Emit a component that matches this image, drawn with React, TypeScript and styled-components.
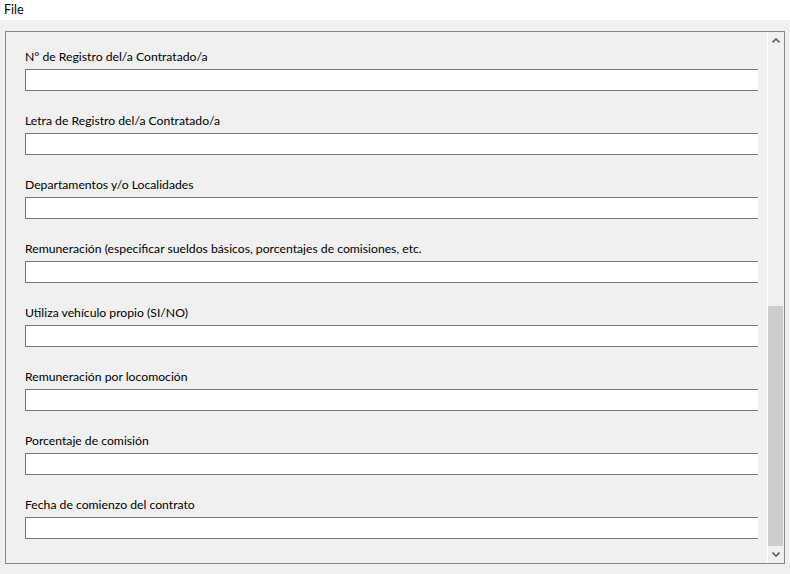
import React from "react";
import styled, { createGlobalStyle } from "styled-components";

const Global = createGlobalStyle`
  html, body { margin: 0; padding: 0; background: #ffffff; }
  body { font-family: "Lato", "Noto Sans", "DejaVu Sans", sans-serif; font-size: 12px; color: #000; }
  #root { width: 790px; height: 574px; overflow: hidden; }
`;

const Window = styled.div`
  width: 790px;
  height: 574px;
  display: flex;
  flex-direction: column;
`;

const MenuBar = styled.div`
  height: 20px;
  display: flex;
  align-items: center;
  background: #ffffff;
  padding-left: 4px;
`;

const MenuItem = styled.span`
  font-size: 12.5px;
  line-height: 16px;
`;

const Body = styled.div`
  flex: 1;
  background: #f0f0f0;
  padding: 11px 5px 10px 5px;
  display: flex;
`;

const Panel = styled.div`
  flex: 1;
  border: 1px solid #828790;
  display: flex;
  min-height: 0;
`;

const Content = styled.div`
  width: 733px;
  padding: 17px 0 0 19px;
  overflow: hidden;
  display: flex;
  flex-direction: column;
  gap: 22px;
`;

const Spacer = styled.div`
  width: 9px;
`;

const Field = styled.div`
  display: flex;
  flex-direction: column;
  gap: 4px;
`;

const Label = styled.div`
  height: 16px;
  line-height: 15px;
  font-size: 12.2px;
  white-space: nowrap;
`;

const Input = styled.div`
  width: 760px;
  height: 20px;
  flex: none;
  background: #ffffff;
  border: 1px solid #7a7a7a;
`;

const Scrollbar = styled.div`
  width: 16px;
  border-left: 1px solid #ffffff;
  background: #f0f0f0;
  display: flex;
  flex-direction: column;
`;

const ArrowButton = styled.div`
  height: 17px;
  display: flex;
  align-items: center;
  justify-content: center;
  flex: none;
`;

const Track = styled.div`
  flex: 1;
  display: flex;
  flex-direction: column;
  justify-content: flex-end;
`;

const Thumb = styled.div`
  height: 240px;
  margin: 0 1px 0 0;
  background: #cdcdcd;
`;

const Chevron = ({ down }: { down?: boolean }) => (
  <svg width="8" height="5" viewBox="0 0 8 5" style={{ transform: down ? "rotate(180deg)" : undefined }}>
    <path d="M0.5 4.5 L4 1 L7.5 4.5" fill="none" stroke="#606060" strokeWidth="1.6" />
  </svg>
);

const labels = [
  "N° de Registro del/a Contratado/a",
  "Letra de Registro del/a Contratado/a",
  "Departamentos y/o Localidades",
  "Remuneración (especificar sueldos básicos, porcentajes de comisiones, etc.",
  "Utiliza vehículo propio (SI/NO)",
  "Remuneración por locomoción",
  "Porcentaje de comisión",
  "Fecha de comienzo del contrato",
];

export default function App() {
  return (
    <Window>
      <Global />
      <MenuBar>
        <MenuItem>File</MenuItem>
      </MenuBar>
      <Body>
        <Panel>
          <Content>
            {labels.map((l) => (
              <Field key={l}>
                <Label>{l}</Label>
                <Input />
              </Field>
            ))}
          </Content>
          <Spacer />
          <Scrollbar>
            <ArrowButton>
              <Chevron />
            </ArrowButton>
            <Track>
              <Thumb />
            </Track>
            <ArrowButton>
              <Chevron down />
            </ArrowButton>
          </Scrollbar>
        </Panel>
      </Body>
    </Window>
  );
}
